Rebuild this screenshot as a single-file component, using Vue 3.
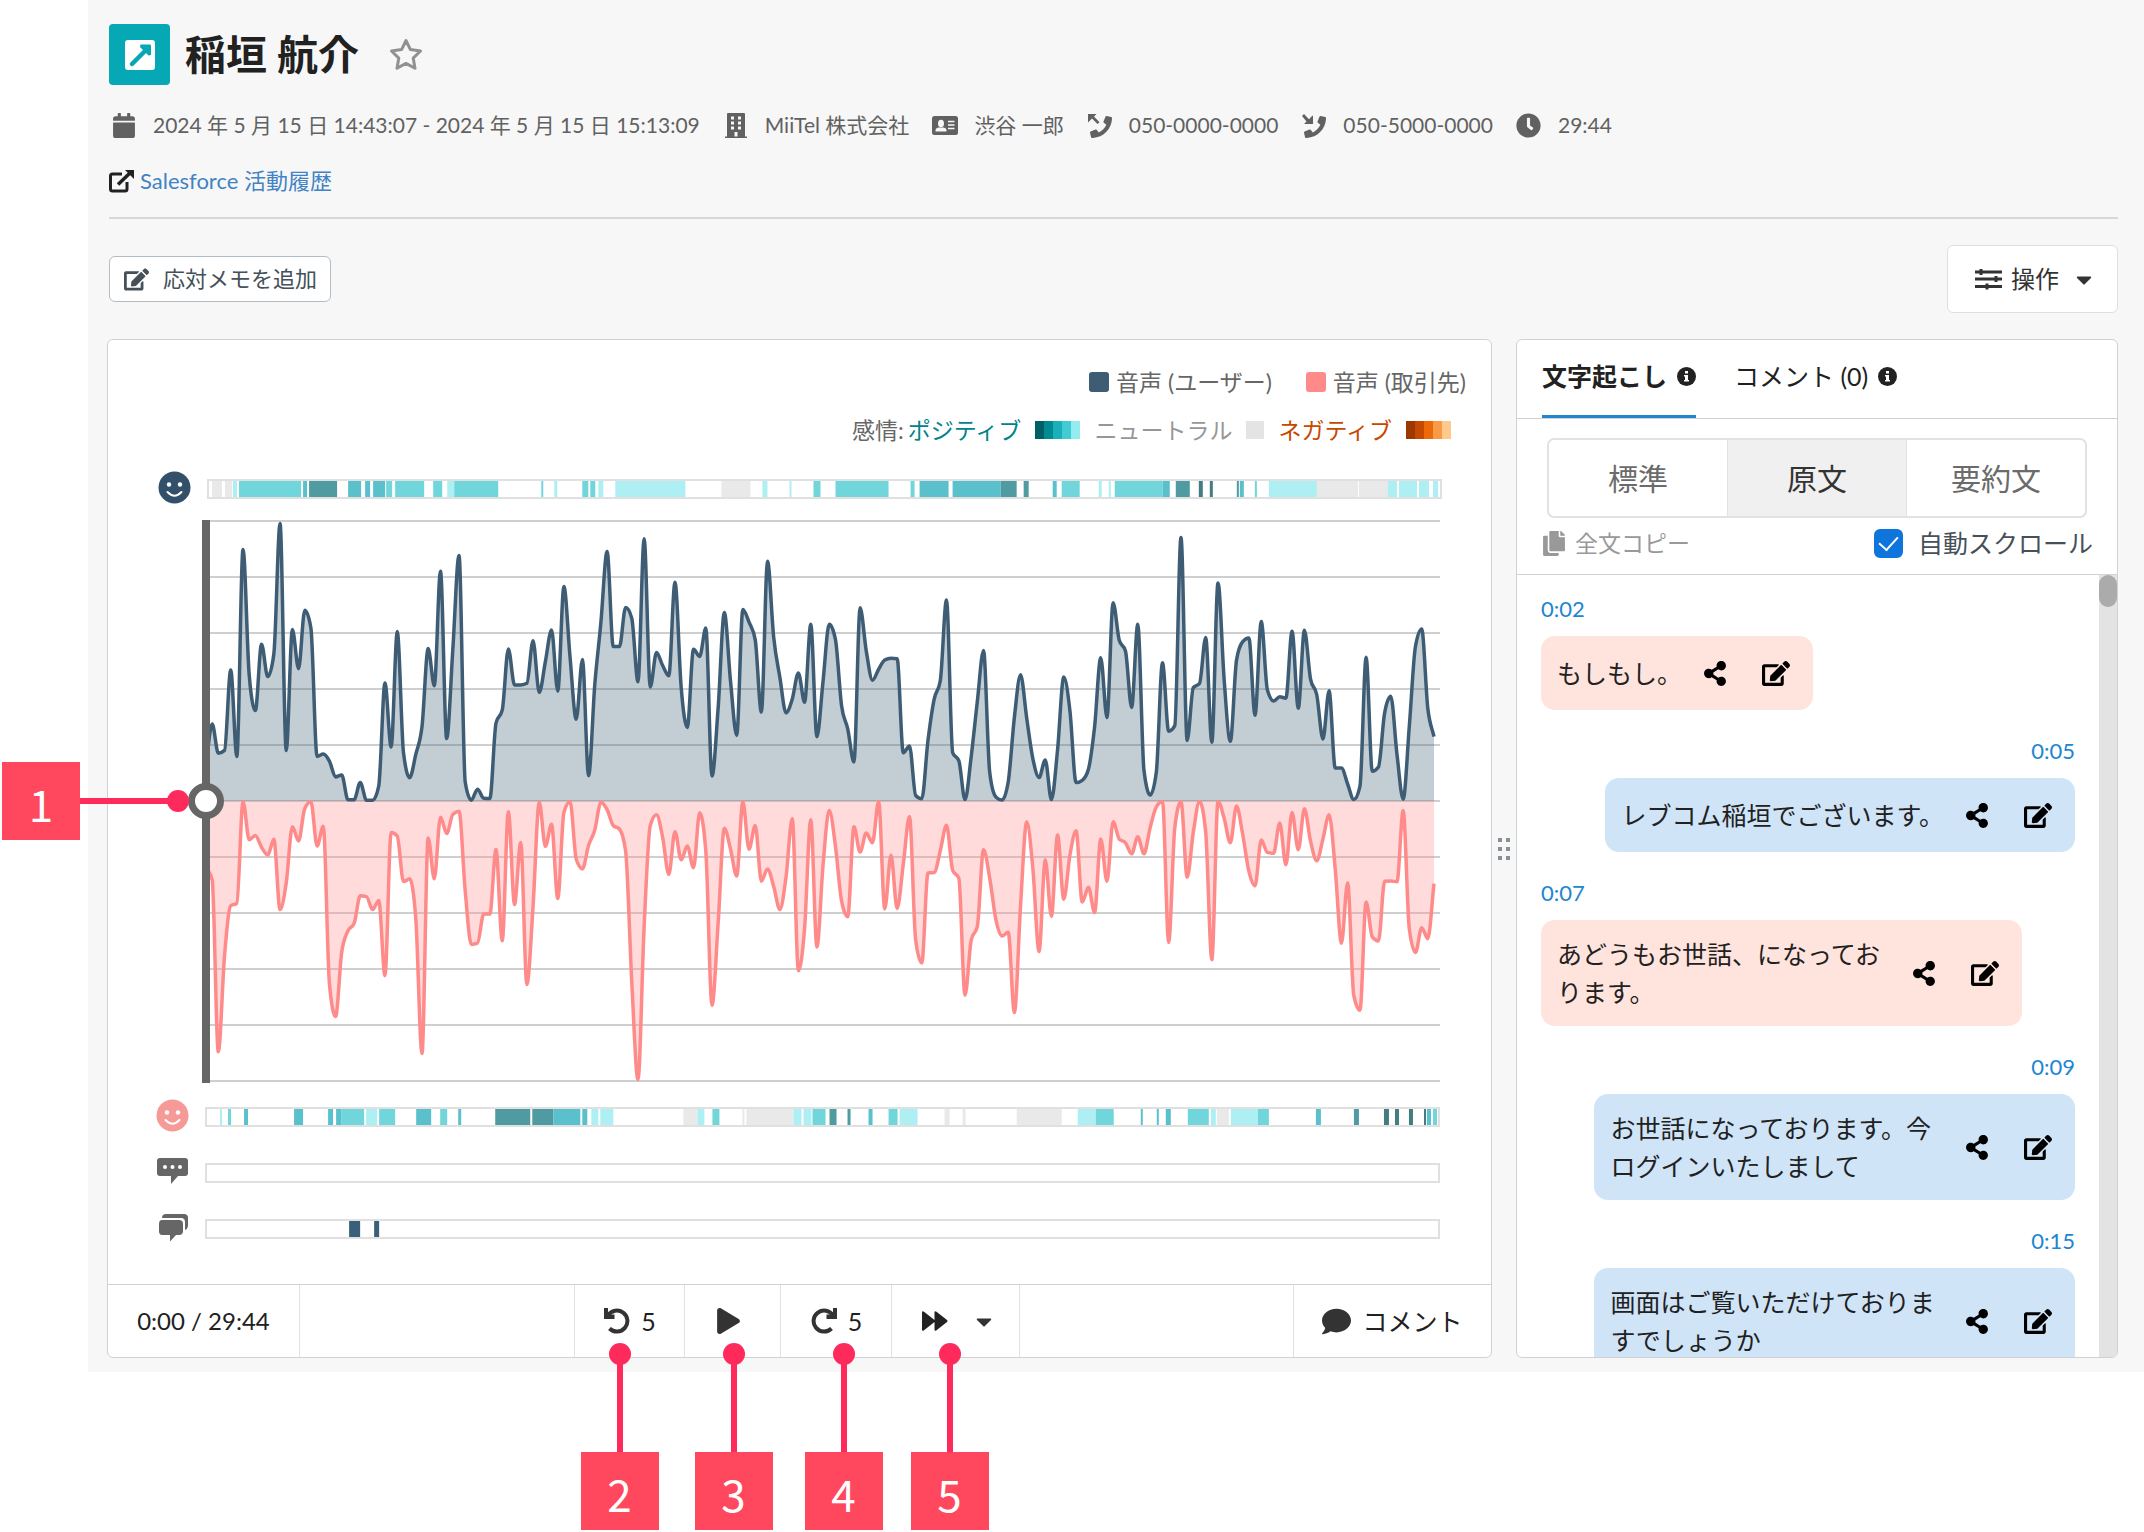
<script setup>
import { ref } from 'vue'

const autoScroll = ref(true)
const position = ref(0)

/* Voice levels, one sample per chart column. Each block has its own zero line and full-scale range. */
const userBlocks = [
  { zero: 863, range: 709, values: [770, 668, 742, 735, 531, 750, 226, 545, 634, 466, 548, 490, 160, 735, 429, 528, 380, 425, 750, 744, 762, 802, 797, 860, 860, 816, 861, 861, 825, 564, 726, 434, 740, 804, 745, 675, 477, 571, 281, 705, 480, 241, 815, 861, 833, 856, 857, 665, 633, 478, 569, 569, 565, 457, 588, 510, 430, 585, 320, 500, 656, 505, 799, 570, 410, 231, 472, 472, 373, 400, 561, 199, 574, 487, 520, 546, 309, 575, 677, 479, 497, 425, 800, 625, 386, 560, 697, 378, 410, 455, 638, 256, 450, 550, 640, 605] },
  { zero: 962, range: 610, values: [683, 747, 577, 822, 700, 577, 610, 755, 805, 877, 541, 635, 699, 675, 655, 651, 652, 857, 842, 950, 957, 830, 740, 700, 524, 857, 874, 959, 865, 745, 634, 900, 953, 960, 920, 780, 687, 782, 870, 911, 873, 959, 850, 692, 765, 922, 917, 893, 800, 650, 780, 530, 612, 635, 758, 577, 895, 949, 900, 661, 810, 798, 388, 830, 715, 706, 606, 834, 487, 700, 832, 655, 615, 607, 775, 571, 720, 744, 735, 738, 592, 760, 590, 697, 730, 827, 722, 890, 890, 925, 959, 930, 649, 897, 888, 770, 734, 860, 958, 800, 625, 587, 760, 822] }
]
const clientBlocks = [
  { zero: 863, range: 709, values: [1030, 1063, 1498, 1255, 1128, 1122, 865, 961, 950, 980, 1000, 960, 1138, 1070, 928, 964, 882, 865, 977, 927, 1325, 1409, 1245, 1192, 1173, 1103, 1105, 1138, 1115, 1305, 943, 952, 1067, 1060, 1160, 1502, 957, 1060, 904, 945, 897, 889, 1090, 1226, 1223, 1149, 1149, 986, 1217, 890, 1125, 968, 1328, 1130, 866, 978, 922, 1110, 892, 865, 1010, 1035, 975, 937, 866, 885, 925, 934, 990, 1320, 1569, 1180, 925, 898, 955, 1049, 941, 1012, 977, 1032, 893, 990, 1380, 1170, 932, 985, 1053, 865, 985, 925, 1066, 1035, 1080, 1138, 1055, 907] },
  { zero: 962, range: 610, values: [1332, 1240, 1003, 1280, 1100, 982, 1060, 1180, 1214, 1018, 1073, 1032, 1053, 963, 1197, 1080, 1196, 1100, 996, 1265, 1315, 1119, 1118, 1070, 1015, 1113, 1130, 1385, 1265, 1235, 1068, 1130, 1220, 1256, 1248, 1423, 1190, 1007, 1110, 1290, 1090, 1213, 1036, 1176, 1080, 1027, 1182, 1150, 1205, 1045, 1137, 1007, 1045, 1053, 1077, 1040, 1077, 1020, 975, 963, 1270, 1020, 963, 1128, 1030, 963, 1030, 1308, 963, 1000, 1053, 973, 1035, 1115, 1147, 1047, 1074, 1076, 1010, 1101, 987, 1068, 979, 1050, 1092, 1045, 992, 1110, 1272, 1140, 1385, 1418, 1182, 1258, 1267, 1137, 1136, 1138, 983, 1240, 1292, 1238, 1262, 1142] }
]

const PLOT_W = 1233
const LINE_W = 1227
const MID = 281

function toPoints(blocks) {
  const levels = blocks.flatMap(b => b.values.map(v => (v - b.zero) / b.range))
  return levels.map((v, i) => [(i * LINE_W) / (levels.length - 1), MID + v * (MID - 1)])
}

/* Monotone cubic curve through the points. */
function curve(pts) {
  const n = pts.length
  const slope = []
  for (let i = 0; i < n - 1; i++) slope.push((pts[i + 1][1] - pts[i][1]) / (pts[i + 1][0] - pts[i][0]))
  const t = pts.map((_, i) => {
    if (i === 0) return slope[0]
    if (i === n - 1) return slope[n - 2]
    const a = slope[i - 1]
    const b = slope[i]
    if (a * b <= 0) return 0
    return Math.sign(a) * Math.min(Math.abs(a) * 2, Math.abs(b) * 2, Math.abs(a + b) / 2)
  })
  let d = `M${pts[0][0].toFixed(1)} ${pts[0][1].toFixed(1)}`
  for (let i = 0; i < n - 1; i++) {
    const [x0, y0] = pts[i]
    const [x1, y1] = pts[i + 1]
    const h = (x1 - x0) / 3
    d += `C${(x0 + h).toFixed(1)} ${(y0 + t[i] * h).toFixed(1)} ${(x1 - h).toFixed(1)} ${(y1 - t[i + 1] * h).toFixed(1)} ${x1.toFixed(1)} ${y1.toFixed(1)}`
  }
  return d
}

const userLine = curve(toPoints(userBlocks))
const clientLine = curve(toPoints(clientBlocks))
const close = `L${LINE_W} ${MID}L0 ${MID}Z`
const gridLines = Array.from({ length: 11 }, (_, i) => 1 + i * 56)

/* Emotion tracks: [start, end, tone] */
const tones = { n: '#e9e9e9', a: '#aeeff3', b: '#70d6dc', c: '#5ac0cb', d: '#4f9ba1', e: '#457c82', u: '#3a6079' }
const userMood = [
  [5, 15, 'n'], [18, 25, 'n'], [26, 30, 'a'], [32, 94, 'b'], [96, 100, 'c'], [102, 130, 'd'], [141, 154, 'c'], [158, 163, 'c'], [166, 178, 'c'], [179, 185, 'b'], [188, 217, 'b'], [226, 235, 'b'], [240, 247, 'a'], [247, 291, 'b'], [334, 336, 'b'], [347, 350, 'a'], [375, 381, 'b'], [383, 388, 'b'], [391, 396, 'a'], [408, 478, 'a'], [514, 543, 'n'], [555, 560, 'a'], [582, 584, 'a'], [606, 613, 'b'], [628, 681, 'b'], [703, 707, 'b'], [712, 741, 'c'], [745, 793, 'c'], [793, 809, 'd'], [816, 821, 'd'], [845, 849, 'c'], [854, 872, 'b'], [891, 894, 'a'], [901, 903, 'a'], [907, 955, 'b'], [955, 962, 'c'], [968, 982, 'd'], [991, 995, 'e'], [1002, 1005, 'e'], [1029, 1031, 'd'], [1032, 1036, 'c'], [1047, 1049, 'b'], [1061, 1109, 'a'], [1109, 1150, 'n'], [1151, 1180, 'n'], [1180, 1189, 'a'], [1191, 1209, 'a'], [1211, 1221, 'a'], [1225, 1230, 'a']
]
const clientMood = [
  [15, 17, 'a'], [23, 26, 'b'], [39, 43, 'c'], [89, 98, 'c'], [123, 128, 'c'], [131, 136, 'c'], [136, 159, 'b'], [161, 172, 'a'], [174, 190, 'b'], [211, 226, 'c'], [235, 242, 'b'], [253, 256, 'c'], [290, 325, 'd'], [327, 348, 'd'], [348, 375, 'c'], [377, 382, 'c'], [386, 393, 'a'], [395, 408, 'a'], [478, 492, 'n'], [492, 499, 'a'], [507, 514, 'b'], [537, 539, 'n'], [541, 588, 'n'], [588, 596, 'a'], [598, 606, 'a'], [607, 620, 'b'], [624, 631, 'd'], [642, 645, 'd'], [663, 667, 'c'], [683, 692, 'b'], [694, 712, 'a'], [739, 744, 'n'], [757, 760, 'n'], [811, 856, 'n'], [872, 890, 'a'], [890, 908, 'b'], [935, 937, 'c'], [951, 953, 'c'], [960, 965, 'c'], [982, 1003, 'b'], [1005, 1010, 'a'], [1011, 1023, 'n'], [1025, 1052, 'a'], [1052, 1063, 'b'], [1110, 1115, 'c'], [1148, 1153, 'd'], [1178, 1183, 'e'], [1189, 1193, 'e'], [1203, 1207, 'e'], [1218, 1220, 'e'], [1221, 1225, 'c'], [1227, 1231, 'b']
]
const lowerTracks = [
  { id: 'client', marks: clientMood },
  { id: 'silence', marks: [] },
  { id: 'overlap', marks: [[144, 155, 'u'], [169, 174, 'u']] }
]

const positive = ['#005f66', '#008b92', '#1bb0b9', '#40ccd2', '#94ecf0']
const negative = ['#9c3800', '#c74800', '#ec6a0a', '#f99a48', '#fdc98d']

const messages = [
  { time: '0:02', mine: false, text: 'もしもし。' },
  { time: '0:05', mine: true, text: 'レブコム稲垣でございます。' },
  { time: '0:07', mine: false, text: 'あどうもお世話、になっております。' },
  { time: '0:09', mine: true, text: 'お世話になっております。今ログインいたしまして' },
  { time: '0:15', mine: true, text: '画面はご覧いただけておりますでしょうか' }
]

const icons = {
  calendar: 'M12 192h424c6.6 0 12 5.4 12 12v260c0 26.5-21.5 48-48 48H48c-26.5 0-48-21.5-48-48V204c0-6.6 5.4-12 12-12zm436-44v-36c0-26.5-21.5-48-48-48h-48V12c0-6.6-5.4-12-12-12h-40c-6.6 0-12 5.4-12 12v52H160V12c0-6.6-5.4-12-12-12h-40c-6.6 0-12 5.4-12 12v52H48C21.5 64 0 85.5 0 112v36c0 6.6 5.4 12 12 12h424c6.6 0 12-5.4 12-12z',
  edit: 'M402.6 83.2l90.2 90.2c3.8 3.8 3.8 10 0 13.8L274.4 405.6l-92.8 10.3c-12.4 1.4-22.9-9.1-21.5-21.5l10.3-92.8L388.8 83.2c3.8-3.8 10-3.8 13.8 0zm162-22.9l-48.8-48.8c-15.2-15.2-39.9-15.2-55.2 0l-35.4 35.4c-3.8 3.8-3.8 10 0 13.8l90.2 90.2c3.8 3.8 10 3.8 13.8 0l35.4-35.4c15.2-15.3 15.2-40 0-55.2zM384 346.2V448H64V128h229.8c3.2 0 6.2-1.3 8.5-3.5l40-40c7.6-7.6 2.2-20.5-8.5-20.5H48C21.5 64 0 85.5 0 112v352c0 26.5 21.5 48 48 48h352c26.5 0 48-21.5 48-48V306.2c0-10.7-12.9-16-20.5-8.5l-40 40c-2.2 2.3-3.5 5.3-3.5 8.5z',
  share: 'M352 320c-22.608 0-43.387 7.819-59.79 20.895l-102.486-64.054a96.551 96.551 0 0 0 0-41.683l102.486-64.054C308.613 184.181 329.392 192 352 192c53.019 0 96-42.981 96-96S405.019 0 352 0s-96 42.981-96 96c0 7.158.79 14.13 2.276 20.841L155.79 180.895C139.387 167.819 118.608 160 96 160c-53.019 0-96 42.981-96 96s42.981 96 96 96c22.608 0 43.387-7.819 59.79-20.895l102.486 64.054A96.301 96.301 0 0 0 256 416c0 53.019 42.981 96 96 96s96-42.981 96-96-42.981-96-96-96z',
  caret: 'M31.3 192h257.3c17.8 0 26.7 21.5 14.1 34.1L174.1 354.8c-7.8 7.8-20.5 7.8-28.3 0L17.2 226.1C4.6 213.5 13.5 192 31.3 192z',
  play: 'M424.4 214.7L72.4 6.6C43.8-10.3 0 6.1 0 47.9V464c0 37.5 40.7 60.1 72.4 41.3l352-208c31.4-18.5 31.5-64.1 0-82.6z',
  comment: 'M256 32C114.6 32 0 125.1 0 240c0 49.6 21.4 95 57 130.7C44.5 421.1 2.7 466 2.2 466.5c-2.2 2.3-2.8 5.7-1.5 8.7S4.8 480 8 480c66.3 0 116-31.8 140.6-51.4 32.7 12.3 69 19.4 107.4 19.4 141.4 0 256-93.1 256-208S397.4 32 256 32z',
  clock: 'M256,8C119,8,8,119,8,256S119,504,256,504,504,393,504,256,393,8,256,8Zm92.49,313h0l-20,25a16,16,0,0,1-22.49,2.5h0l-67-49.72a40,40,0,0,1-15-31.23V112a16,16,0,0,1,16-16h32a16,16,0,0,1,16,16V256l58,42.5A16,16,0,0,1,348.49,321Z',
  copy: 'M320 448v40c0 13.255-10.745 24-24 24H24c-13.255 0-24-10.745-24-24V120c0-13.255 10.745-24 24-24h72v296c0 30.879 25.121 56 56 56h168zm0-344V0H152c-13.255 0-24 10.745-24 24v368c0 13.255 10.745 24 24 24h272c13.255 0 24-10.745 24-24V128H344c-13.2 0-24-10.8-24-24zm120.971-31.029L375.029 7.029A24 24 0 0 0 358.059 0H352v96h96v-6.059a24 24 0 0 0-7.029-16.97z',
  phone: 'M493.4 24.6l-104-24c-11.3-2.6-22.9 3.3-27.5 13.9l-48 112c-4.2 9.8-1.4 21.3 6.9 28l60.6 49.6c-36 76.7-98.9 140.5-177.2 177.2l-49.6-60.6c-6.8-8.3-18.2-11.1-28-6.9l-112 48C3.9 366.5-2 378.1.6 389.4l24 104C27.1 504.2 36.7 512 48 512c256.1 0 464-207.5 464-464 0-11.2-7.7-20.9-18.6-23.4z'
}
</script>

<template>
  <div class="page">
    <main class="app">
      <header class="head">
        <div class="title-row">
          <span class="call-type">
            <svg width="30" height="30" viewBox="0 0 30 30"><rect width="30" height="30" rx="3" fill="#fff" /><path d="M7 24L20 11" stroke="#05a8b4" stroke-width="4.500" stroke-linecap="round" /><path d="M15.500 4.500H25a1 1 0 0 1 1 1V15l-2.500.500L15 7z" fill="#05a8b4" /></svg>
          </span>
          <h1>稲垣 航介</h1>
          <button class="plain star" aria-label="お気に入り">
            <svg width="34" height="33" viewBox="0 0 34 33" fill="none" stroke="#919191" stroke-width="3" stroke-linejoin="round"><path d="M17 2.500L21.400 11.600L31.500 13L24.200 20.100L26 30.200L17 25.400L8 30.200L9.800 20.100L2.500 13L12.600 11.600Z" /></svg>
          </button>
        </div>
        <ul class="meta">
          <li><span class="ico"><svg width="22" height="25" viewBox="0 0 448 512" fill="currentColor"><path :d="icons.calendar" /></svg></span>2024 年 5 月 15 日 14:43:07 - 2024 年 5 月 15 日 15:13:09</li>
          <li><span class="ico"><svg width="22" height="25" viewBox="0 0 22 25" fill="currentColor"><path fill-rule="evenodd" d="M2 1q0-1 1-1h16q1 0 1 1v22.500h2V25H0v-1.500h2zM6 3.500v3h3v-3zm7 0v3h3v-3zM6 8.500v3h3v-3zm7 0v3h3v-3zM6 13.500v3h3v-3zm7 0v3h3v-3zM9.500 19v4.500h3V19z" /></svg></span>MiiTel 株式会社</li>
          <li><span class="ico"><svg width="26" height="19" viewBox="0 0 26 19"><rect width="26" height="19" rx="2.500" fill="currentColor" /><ellipse cx="9" cy="7.500" rx="3" ry="3.800" fill="#f7f7f7" /><path d="M3.500 15.500v-1q0-2.500 3-3h5q3 .5 3 3v1z" fill="#f7f7f7" /><path d="M16 5.500h6.500M16 9h6.500M16 12.500h6.500" stroke="#f7f7f7" stroke-width="1.500" /></svg></span>渋谷 一郎</li>
          <li><span class="ico"><svg width="24" height="25" viewBox="0 0 24 25" fill="currentColor"><path transform="translate(2 3) scale(.043)" :d="icons.phone" /><path d="M0 1h8.500L6 3.500l5.500 5.700-2 1.800L4 5.500 1 8.500 0 9.500z" /></svg></span>050-0000-0000</li>
          <li><span class="ico"><svg width="24" height="25" viewBox="0 0 24 25" fill="currentColor"><path transform="translate(2 3) scale(.043)" :d="icons.phone" /><path d="M11 11H2l2.500-2.500L0 3 2 1l5 5.200L10 3l1-.5z" /></svg></span>050-5000-0000</li>
          <li><span class="ico"><svg width="25" height="25" viewBox="0 0 512 512" fill="currentColor"><path :d="icons.clock" /></svg></span>29:44</li>
        </ul>
        <p class="crm">
          <svg width="25" height="23" viewBox="0 0 25 23"><path d="M13 4H3.500Q1.500 4 1.500 6v13q0 2 2 2H16q2 0 2-2v-7" fill="none" stroke="#222" stroke-width="3" /><path d="M9 14.500L21 3" stroke="#222" stroke-width="3.500" /><path d="M16 0h9v9z" fill="#222" /></svg>
          <a href="#">Salesforce 活動履歴</a>
        </p>
      </header>

      <div class="toolbar">
        <button class="memo"><svg width="25" height="23" viewBox="0 0 576 512" fill="currentColor"><path :d="icons.edit" /></svg>応対メモを追加</button>
        <button class="ops">
          <svg width="27" height="22" viewBox="0 0 27 22" stroke="currentColor" stroke-width="3" fill="none"><path d="M0 4h27M0 11h27M0 18.500h27" /><path d="M6 1v6M21 8v6M12 15.500v6" stroke-width="3" /></svg>
          操作
          <svg class="caret" width="16" height="25" viewBox="0 0 320 512" fill="currentColor"><path :d="icons.caret" /></svg>
        </button>
      </div>

      <div class="panels">
        <section class="card player">
          <div class="legend">
            <div class="legend-row voices">
              <span><i class="box user"></i>音声 (ユーザー)</span>
              <span><i class="box client"></i>音声 (取引先)</span>
            </div>
            <div class="legend-row moods">
              <span>感情: <b class="pos">ポジティブ</b></span>
              <span class="ramp"><i v-for="c in positive" :key="c" :style="{ background: c }"></i></span>
              <span class="neu">ニュートラル</span>
              <span class="ramp"><i class="wide"></i></span>
              <span class="neg">ネガティブ</span>
              <span class="ramp"><i v-for="c in negative" :key="c" :style="{ background: c }"></i></span>
            </div>
          </div>

          <div class="tracks">
            <div class="track-row first">
              <svg width="33" height="33" viewBox="0 0 33 33"><circle cx="16.500" cy="16.500" r="16" fill="#33506a" /><circle cx="11" cy="13.500" r="2.200" fill="#fff" /><circle cx="22" cy="13.500" r="2.200" fill="#fff" /><path d="M9.500 21q7 7.500 14 0" fill="none" stroke="#fff" stroke-width="2" stroke-linecap="round" /></svg>
              <div class="track">
                <svg viewBox="0 0 1234 20" preserveAspectRatio="none"><rect v-for="m in userMood" :key="m[0]" :x="m[0]" y="1" :width="m[1] - m[0]" height="19" :fill="tones[m[2]]" /></svg>
              </div>
            </div>

            <div class="plot">
              <svg class="wave" :viewBox="`0 0 ${PLOT_W} 563`" preserveAspectRatio="none">
                <path v-for="y in gridLines" :key="y" :d="`M0 ${y}H${PLOT_W}`" stroke="#cfcfcf" stroke-width="2" />
                <path :d="userLine + close" fill="#3e5d75" fill-opacity=".31" />
                <path :d="clientLine + close" fill="#ff8a8a" fill-opacity=".31" />
                <path class="line" :d="userLine" stroke="#3e5d75" stroke-width="3.5" />
                <path class="line" :d="clientLine" stroke="#ff8a8a" stroke-width="3.5" />
              </svg>
              <div class="playhead"></div>
              <input v-model="position" class="seek" type="range" min="0" max="1784" aria-label="再生位置" />
              <div class="callout side"><b>1</b></div>
            </div>

            <div v-for="t in lowerTracks" :key="t.id" class="track-row">
              <svg v-if="t.id === 'client'" width="33" height="33" viewBox="0 0 33 33"><circle cx="16.500" cy="16.500" r="16" fill="#f59a97" /><circle cx="11" cy="13.500" r="2.200" fill="#fff" /><circle cx="22" cy="13.500" r="2.200" fill="#fff" /><path d="M9.500 21q7 7.500 14 0" fill="none" stroke="#fff" stroke-width="2" stroke-linecap="round" /></svg>
              <svg v-else-if="t.id === 'silence'" width="33" height="27" viewBox="0 0 33 27"><path d="M4 0h25q3 0 3 3v12q0 3-3 3h-7l-7 8v-8H4q-3 0-3-3V3q0-3 3-3z" fill="#666" /><circle cx="9" cy="9" r="2" fill="#fff" /><circle cx="16.500" cy="9" r="2" fill="#fff" /><circle cx="24" cy="9" r="2" fill="#fff" /></svg>
              <svg v-else width="33" height="28" viewBox="0 0 33 28" fill="#666"><path d="M6 4q0-4 4-4h18q4 0 4 4v7q0 4-3 5V8q0-4-4-4z" /><path d="M6 6h17q4 0 4 4v7q0 4-4 4h-3l-6 6.500V21H6q-3 0-3-4v-7q0-4 3-4z" /></svg>
              <div class="track">
                <svg viewBox="0 0 1234 20" preserveAspectRatio="none"><rect v-for="m in t.marks" :key="m[0]" :x="m[0]" y="1" :width="m[1] - m[0]" height="19" :fill="tones[m[2]]" /></svg>
              </div>
            </div>
          </div>

          <div class="controls">
            <span class="clock">0:00 / 29:44</span>
            <span class="spacer"></span>
            <button class="back" aria-label="5秒戻る">
              <svg width="26" height="26" viewBox="0 0 26 26"><path d="M4 7.500A10.500 10.500 0 1 1 5.500 20.500" fill="none" stroke="#333" stroke-width="4" /><path d="M0 0h4v6.500h6.500V11H0z" fill="#333" /></svg>5
              <span class="callout down"><b>2</b></span>
            </button>
            <button class="start" aria-label="再生">
              <svg width="23" height="26" viewBox="0 0 448 512" fill="#333"><path :d="icons.play" /></svg>
              <span class="callout down"><b>3</b></span>
            </button>
            <button class="ahead" aria-label="5秒進む">
              <svg width="26" height="26" viewBox="0 0 26 26"><path d="M22 7.500A10.500 10.500 0 1 0 20.500 20.500" fill="none" stroke="#333" stroke-width="4" /><path d="M26 0h-4v6.500h-6.500V11H26z" fill="#333" /></svg>5
              <span class="callout down"><b>4</b></span>
            </button>
            <button class="speed" aria-label="再生速度">
              <svg width="26" height="20" viewBox="0 0 26 20" fill="#222"><path d="M0 1.500Q0-.5 2 .8L12.500 9V1.500Q12.500-.5 14.500.8L25 9q1 1 0 2L14.500 19.200q-2 1.300-2-.7V11L2 19.200q-2 1.300-2-.7z" /></svg>
              <svg width="16" height="25" viewBox="0 0 320 512" fill="#333"><path :d="icons.caret" /></svg>
              <span class="callout down"><b>5</b></span>
            </button>
            <span class="spacer"></span>
            <button class="note"><svg width="29" height="29" viewBox="0 0 512 512" fill="#333"><path :d="icons.comment" /></svg>コメント</button>
          </div>
        </section>

        <div class="grip"><i v-for="n in 6" :key="n"></i></div>

        <section class="card transcript">
          <nav class="tabs">
            <button class="tab on">文字起こし<span class="info"><svg width="19" height="19" viewBox="0 0 19 19"><circle cx="9.500" cy="9.500" r="9.500" fill="#222" /><path d="M8 4h3v2.500H8zM7 8h4v5h1v1.500H7V13h1V9.500H7z" fill="#fff" /></svg></span></button>
            <button class="tab">コメント (0)<span class="info"><svg width="19" height="19" viewBox="0 0 19 19"><circle cx="9.500" cy="9.500" r="9.500" fill="#222" /><path d="M8 4h3v2.500H8zM7 8h4v5h1v1.500H7V13h1V9.500H7z" fill="#fff" /></svg></span></button>
          </nav>
          <div class="modes">
            <button>標準</button>
            <button class="on">原文</button>
            <button>要約文</button>
          </div>
          <div class="options">
            <button class="plain copy"><svg width="22" height="25" viewBox="0 0 448 512" fill="currentColor"><path :d="icons.copy" /></svg>全文コピー</button>
            <label class="auto"><input v-model="autoScroll" type="checkbox" /><span>自動スクロール</span></label>
          </div>
          <div class="feed">
            <ol class="messages">
              <li v-for="m in messages" :key="m.time" :class="{ mine: m.mine }">
                <a class="time" href="#">{{ m.time }}</a>
                <div class="bubble">
                  <p>{{ m.text }}</p>
                  <button class="plain share" aria-label="共有"><svg width="22" height="25" viewBox="0 0 448 512"><path :d="icons.share" /></svg></button>
                  <button class="plain" aria-label="編集"><svg width="28" height="25" viewBox="0 0 576 512"><path :d="icons.edit" /></svg></button>
                </div>
              </li>
            </ol>
            <div class="scrollbar"><i></i></div>
          </div>
        </section>
      </div>
    </main>
  </div>
</template>

<style>
body {
  margin: 0;
  background: #fff;
}
</style>

<style scoped>
.page {
  padding: 0 0 160px 88px;
  overflow: hidden;
  font-family: Lato, "Noto Sans CJK JP", sans-serif;
  font-size: 22px;
  line-height: 1.4;
  color: #212121;
}
.page * {
  box-sizing: border-box;
}
button {
  margin: 0;
  padding: 0;
  border: 0;
  background: none;
  font: inherit;
  color: inherit;
  cursor: pointer;
}
svg {
  display: block;
  flex: none;
}
.plain {
  display: flex;
  align-items: center;
}
.app {
  background: #f7f7f7;
  padding: 24px 26px 14px 19px;
}
.head {
  margin-left: 2px;
  border-bottom: 2px solid #d6d7d8;
}
.title-row {
  display: flex;
  align-items: center;
  height: 61px;
}
.call-type {
  display: flex;
  align-items: center;
  justify-content: center;
  width: 61px;
  height: 61px;
  border-radius: 4px;
  background: #05a8b4;
}
h1 {
  margin: 0 30px 0 15px;
  font-size: 41px;
  line-height: 60px;
  font-weight: 700;
}
.meta {
  display: flex;
  gap: 21px;
  margin: 24px 0 0;
  padding: 0;
  list-style: none;
  font-size: 21px;
  line-height: 32px;
  color: #616161;
  white-space: nowrap;
}
.meta li {
  display: flex;
  align-items: center;
}
.ico {
  display: flex;
  justify-content: center;
  width: 30px;
  margin-right: 14px;
}
.crm {
  display: flex;
  align-items: center;
  gap: 6px;
  margin: 24px 0 20px;
  line-height: 32px;
}
.crm a {
  color: #4183c4;
  text-decoration: none;
}
.toolbar {
  display: flex;
  align-items: center;
  justify-content: space-between;
  margin: 26px 0 26px 2px;
}
.memo {
  display: flex;
  align-items: center;
  gap: 14px;
  height: 46px;
  padding: 0 13px 0 14px;
  border: 1px solid #b3bdc6;
  border-radius: 6px;
  background: #fff;
  color: #455058;
}
.ops {
  display: flex;
  align-items: center;
  gap: 9px;
  height: 68px;
  padding: 0 25px 0 27px;
  border: 1px solid #dedfe0;
  border-radius: 6px;
  background: #fff;
  font-size: 24px;
  color: #333;
}
.ops .caret {
  margin-left: 8px;
}
.panels {
  display: flex;
}
.card {
  border: 1px solid #cfd1d3;
  border-radius: 6px;
  background: #fff;
}
.player {
  flex: 1 1 0;
  min-width: 0;
}
.legend {
  padding-top: 24px;
  font-size: 23px;
  color: #666;
  white-space: nowrap;
}
.legend-row {
  display: flex;
  justify-content: flex-end;
  align-items: center;
  height: 36px;
}
.legend-row span {
  display: flex;
  align-items: center;
}
.voices {
  gap: 34px;
  padding-right: 25px;
}
.box {
  width: 20px;
  height: 20px;
  margin-right: 7px;
  border-radius: 3px;
}
.box.user {
  background: #3e5d75;
}
.box.client {
  background: #ff8a8a;
}
.moods {
  gap: 14px;
  margin-top: 12px;
  padding-right: 40px;
}
.moods b {
  margin-left: 4px;
  font-weight: 400;
}
.pos {
  color: #00838a;
}
.neu {
  color: #979797;
}
.neg {
  color: #c74800;
}
.ramp i {
  width: 9px;
  height: 18px;
}
.ramp .wide {
  width: 18px;
  background: #e4e4e4;
}
.tracks {
  padding: 31px 51px 0 48px;
}
.track-row {
  display: flex;
  align-items: center;
  height: 20px;
  margin-bottom: 36px;
}
.track-row.first {
  margin-right: -2px;
  padding-left: 2px;
}
.track-row > svg {
  width: 33px;
  margin-top: -3px;
}
.track {
  flex: 1;
  height: 20px;
  margin-left: 16px;
  outline: 2px solid #e0e0e0;
  outline-offset: -2px;
}
.track svg {
  width: 100%;
  height: 20px;
}
.plot {
  position: relative;
  height: 563px;
  margin: -15px 0 24px 50px;
}
.wave {
  width: 100%;
  height: 563px;
  overflow: visible;
}
.line {
  fill: none;
  stroke-linejoin: round;
  vector-effect: non-scaling-stroke;
}
.playhead {
  position: absolute;
  top: 0;
  bottom: 0;
  left: -4px;
  width: 8px;
  background: #666;
}
.seek {
  position: absolute;
  top: 263px;
  left: -18px;
  width: calc(100% + 36px);
  height: 36px;
  margin: 0;
  appearance: none;
  background: none;
}
.seek::-webkit-slider-thumb {
  appearance: none;
  width: 36px;
  height: 36px;
  border: 7px solid #666;
  border-radius: 50%;
  background: #fff;
}
.callout {
  position: absolute;
  z-index: 2;
  background: #ff2a5c;
}
.callout::before {
  content: "";
  position: absolute;
  width: 22px;
  height: 22px;
  border-radius: 50%;
  background: #ff2a5c;
}
.callout b {
  position: absolute;
  width: 78px;
  height: 78px;
  padding-top: 8px;
  background: #ff475d;
  color: #fff;
  font: 400 44px/66px "Noto Sans CJK JP", sans-serif;
  text-align: center;
}
.side {
  top: 278px;
  left: -126px;
  width: 98px;
  height: 6px;
}
.side::before {
  top: -8px;
  right: -11px;
}
.side b {
  top: -36px;
  right: 98px;
}
.down {
  top: 69px;
  left: 45px;
  width: 6px;
  height: 98px;
}
.down::before {
  top: -11px;
  left: -8px;
}
.down b {
  top: 98px;
  left: -36px;
}
.back .down {
  left: 42px;
}
.start .down {
  left: 46px;
}
.ahead .down {
  left: 60px;
}
.speed .down {
  left: 55px;
}
.controls {
  display: flex;
  height: 73px;
  margin-top: 45px;
  border-top: 1px solid #cfd1d3;
  font-size: 25px;
}
.controls > * {
  position: relative;
  display: flex;
  align-items: center;
  justify-content: center;
  flex: none;
  border-right: 1px solid #e2e2e2;
}
.controls > .spacer {
  flex: 1;
}
.controls > .clock {
  width: 192px;
  font-size: 24px;
}
.controls > .back {
  gap: 11px;
  width: 110px;
  padding-left: 2px;
}
.controls > .start {
  width: 96px;
  padding-right: 8px;
}
.controls > .ahead {
  gap: 11px;
  width: 111px;
  padding-left: 2px;
}
.controls > .speed {
  gap: 28px;
  width: 128px;
  padding-left: 4px;
}
.controls > .note {
  gap: 11px;
  width: 197px;
  border-right: 0;
}
.grip {
  display: grid;
  grid-template-columns: 4px 4px;
  gap: 5px 4px;
  align-content: center;
  justify-content: center;
  width: 24px;
}
.grip i {
  width: 4px;
  height: 4px;
  background: #888f95;
}
.transcript {
  display: flex;
  flex-direction: column;
  flex: 0 1 602px;
  min-width: 520px;
  height: 1019px;
  overflow: hidden;
}
.tabs {
  display: flex;
  gap: 38px;
  height: 79px;
  padding-left: 25px;
  border-bottom: 1px solid #cfd1d3;
  font-size: 25px;
}
.tab {
  display: flex;
  align-items: center;
  padding-bottom: 2px;
  border-bottom: 3px solid transparent;
}
.tab.on {
  border-color: #2185d0;
  font-weight: 700;
}
.info {
  margin-left: 10px;
}
.modes {
  display: flex;
  flex: none;
  height: 80px;
  margin: 19px 30px 0;
  border: 2px solid #e2e2e2;
  border-radius: 7px;
  overflow: hidden;
}
.modes button {
  flex: 1;
  font-size: 30px;
  color: #6b6b6b;
}
.modes button + button {
  border-left: 1px solid #e2e2e2;
}
.modes .on {
  background: #f0f0f0;
  color: #333;
}
.options {
  display: flex;
  flex: none;
  align-items: center;
  justify-content: space-between;
  height: 57px;
  padding: 0 24px 6px 26px;
  border-bottom: 1px solid #cdd3d6;
}
.copy {
  gap: 10px;
  font-size: 23px;
  color: #999;
}
.auto {
  display: flex;
  align-items: center;
  gap: 15px;
  font-size: 25px;
  color: #455058;
}
.auto input {
  display: grid;
  place-items: center;
  width: 29px;
  height: 29px;
  margin: 0;
  border: 2px solid #0d75db;
  border-radius: 6px;
  appearance: none;
}
.auto input:checked {
  background: #0d75db;
}
.auto input:checked::before {
  content: "";
  width: 9px;
  height: 16px;
  margin-top: -4px;
  border: solid #fff;
  border-width: 0 2px 2px 0;
  rotate: 42deg;
}
.feed {
  display: flex;
  flex: 1;
  min-height: 0;
}
.messages {
  flex: 1;
  margin: 0;
  padding: 21px 24px 0;
  overflow: hidden;
  list-style: none;
}
.messages li {
  display: flex;
  flex-direction: column;
  align-items: flex-start;
  margin-bottom: 28px;
}
.messages .mine {
  align-items: flex-end;
}
.time {
  margin-bottom: 14px;
  line-height: 26px;
  color: #2185d0;
  text-decoration: none;
}
.bubble {
  display: flex;
  align-items: center;
  max-width: 90%;
  min-height: 74px;
  padding: 15px 23px 15px 16px;
  border-radius: 14px;
  background: #ffe3dd;
}
.mine .bubble {
  background: #d0e4f8;
}
.bubble p {
  flex: 1;
  margin: 0;
  font-size: 25px;
  line-height: 38px;
}
.share {
  margin: 0 36px 0 22px;
}
.scrollbar {
  width: 18px;
  background: #e3e3e3;
}
.scrollbar i {
  display: block;
  height: 32px;
  border-radius: 9px;
  background: #ababab;
}
</style>
